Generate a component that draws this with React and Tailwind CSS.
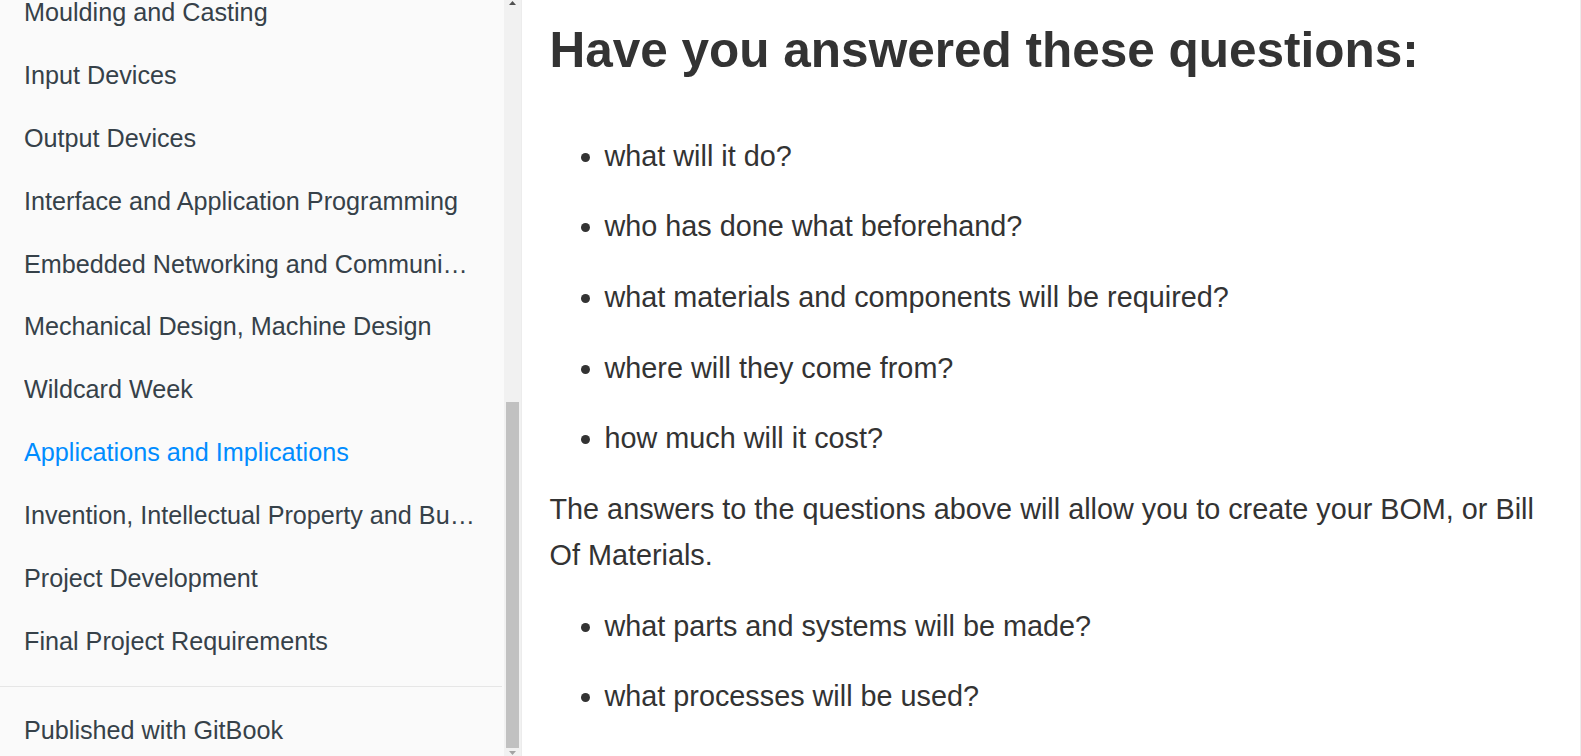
import React from 'react';

const chapters = [
  'Moulding and Casting',
  'Input Devices',
  'Output Devices',
  'Interface and Application Programming',
  'Embedded Networking and Communications',
  'Mechanical Design, Machine Design',
  'Wildcard Week',
  'Applications and Implications',
  'Invention, Intellectual Property and Business Models',
  'Project Development',
  'Final Project Requirements',
];

const ACTIVE = 'Applications and Implications';

const questions = [
  'what will it do?',
  'who has done what beforehand?',
  'what materials and components will be required?',
  'where will they come from?',
  'how much will it cost?',
];

const moreQuestions = ['what parts and systems will be made?', 'what processes will be used?'];

const Sidebar = () => (
  <div className="flex h-full shrink-0">
    <nav className="w-[504px] h-full overflow-hidden bg-[#fafafa] text-[25.2px] text-[#364149]">
      <ul className="mt-[-19.35px]">
        {chapters.map((title) => (
          <li
            key={title}
            className={`h-[62.9px] flex items-center pl-[24px] pr-[28px] ${
              title === ACTIVE ? 'text-[#008cff]' : ''
            }`}
          >
            <span className="block w-full truncate leading-[1.2]">{title}</span>
          </li>
        ))}
        {/* divider */}
        <li className="h-px bg-[#e6e6e6] mt-[13.5px] mr-[2px]" />
        <li className="h-[62.9px] flex items-center pl-[24px] mt-[11.5px]">
          <span className="leading-[1.2]">Published with GitBook</span>
        </li>
      </ul>
    </nav>

    {/* fake scrollbar */}
    <div className="w-[17px] h-full bg-[#f1f1f1] flex flex-col items-center">
      <svg width="7" height="4" viewBox="0 0 7 4" className="mt-[1px]">
        <polygon points="3.5,0 7,4 0,4" fill="#505050" />
      </svg>
      <div className="h-[397px] shrink-0" />
      <div className="w-[13px] h-[346px] shrink-0 bg-[#c1c1c1]" />
      <svg width="7" height="4" viewBox="0 0 7 4" className="mt-[3px]">
        <polygon points="0,0 7,0 3.5,4" fill="#a3a3a3" />
      </svg>
    </div>
    <div className="w-px h-full bg-[#ececec]" />
  </div>
);

const Content = () => (
  <main className="flex-1 h-full overflow-hidden bg-white text-[#333333] border-r border-[#ececec]">
    <div className="pl-[27.5px] pr-[40px] pt-[19.5px]">
      <h2 className="text-[49.5px] font-bold leading-[1.2] h-[60px]">Have you answered these questions:</h2>

      <div className="flex flex-col gap-[24.2px] mt-[53.3px] text-[28.8px] leading-[46.4px]">
        <ul className="list-disc pl-[55px] flex flex-col gap-[24.2px]">
          {questions.map((q) => (
            <li key={q}>{q}</li>
          ))}
        </ul>

        <p>
          The answers to the questions above will allow you to create your BOM, or Bill
          <br />
          Of Materials.
        </p>

        <ul className="list-disc pl-[55px] flex flex-col gap-[24.2px]">
          {moreQuestions.map((q) => (
            <li key={q}>{q}</li>
          ))}
        </ul>
      </div>
    </div>
  </main>
);

export default function App() {
  return (
    <div
      className="flex w-full h-[756px] overflow-hidden"
      style={{ fontFamily: '"Liberation Sans", Arial, sans-serif' }}
    >
      <Sidebar />
      <Content />
    </div>
  );
}
